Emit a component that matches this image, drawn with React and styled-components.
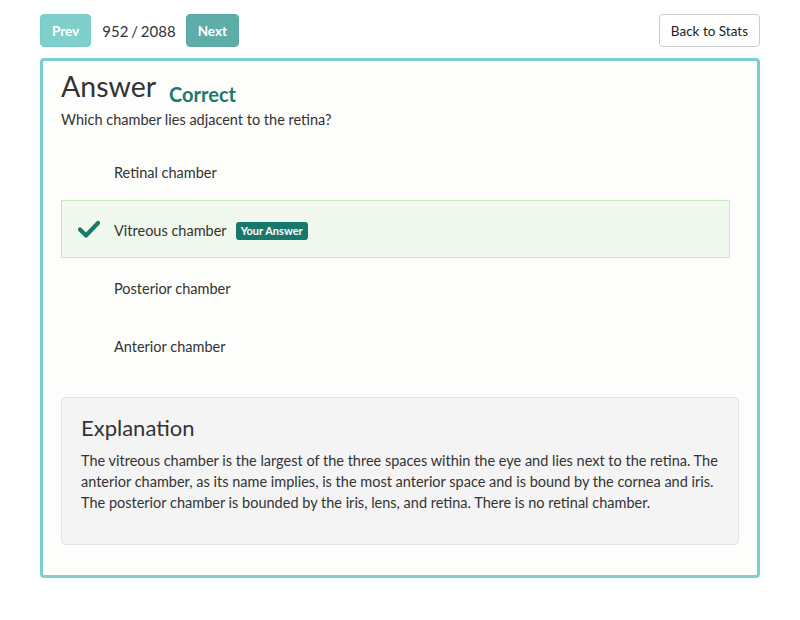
import styled, { createGlobalStyle } from "styled-components";

const GlobalStyle = createGlobalStyle`
  body {
    margin: 0;
    background: #ffffff;
    font-family: Lato, "Open Sans", sans-serif;
    color: #333333;
  }
`;

const options = [
  { label: "Retinal chamber" },
  { label: "Vitreous chamber", selected: true },
  { label: "Posterior chamber" },
  { label: "Anterior chamber" },
];

const Check = () => (
  <svg width="22" height="18" viewBox="0 0 22 18">
    <path
      d="M2 9.5 L8 15.5 L20 3"
      fill="none"
      stroke="#1a7a6c"
      strokeWidth="4.2"
      strokeLinecap="round"
      strokeLinejoin="round"
    />
  </svg>
);

const App = () => {
  return (
    <Page>
      <GlobalStyle />
      <Toolbar>
        <NavButton $tone="light">Prev</NavButton>
        <Counter>952 / 2088</Counter>
        <NavButton $tone="dark">Next</NavButton>
        <BackButton>Back to Stats</BackButton>
      </Toolbar>
      <Card>
        <HeadingRow>
          <Title>Answer</Title>
          <Verdict>Correct</Verdict>
        </HeadingRow>
        <Question>Which chamber lies adjacent to the retina?</Question>
        <OptionList>
          {options.map((o) => (
            <Option key={o.label} $selected={o.selected}>
              <Mark>{o.selected && <Check />}</Mark>
              <OptionText>{o.label}</OptionText>
              {o.selected && <Badge>Your Answer</Badge>}
            </Option>
          ))}
        </OptionList>
        <Explanation>
          <ExplanationTitle>Explanation</ExplanationTitle>
          <ExplanationText>
            The vitreous chamber is the largest of the three spaces within the
            eye and lies next to the retina. The anterior chamber, as its name
            implies, is the most anterior space and is bound by the cornea and
            iris. The posterior chamber is bounded by the iris, lens, and
            retina. There is no retinal chamber.
          </ExplanationText>
        </Explanation>
      </Card>
    </Page>
  );
};

export default App;

const Page = styled.div`
  width: 720px;
  padding: 14px 40px 0;
`;

const Toolbar = styled.div`
  display: flex;
  align-items: center;
  height: 33px;
  margin-bottom: 11px;
`;

const NavButton = styled.button`
  height: 33px;
  padding: 0 11px;
  border: 1px solid ${(p) => (p.$tone === "dark" ? "#5aa9a5" : "#79cbc8")};
  border-radius: 4px;
  background: ${(p) => (p.$tone === "dark" ? "#5fada9" : "#7fd0cd")};
  color: #ffffff;
  font-family: Lato, sans-serif;
  font-weight: 700;
  font-size: 13.5px;
`;

const Counter = styled.span`
  margin: 0 10px 0 11px;
  font-size: 15px;
  color: #333;
  word-spacing: -1px;
`;

const BackButton = styled.button`
  margin-left: auto;
  height: 33px;
  padding: 0 11px;
  border: 1px solid #cccccc;
  border-radius: 4px;
  background: #ffffff;
  color: #222;
  font-family: Lato, sans-serif;
  font-size: 13.5px;
`;

const Card = styled.div`
  border: 3px solid #7ccfcc;
  border-radius: 4px;
  background: #fdfdfb;
  padding: 6px 18px 30px 18px;
`;

const HeadingRow = styled.div`
  display: flex;
  align-items: flex-end;
  gap: 13px;
  height: 38px;
`;

const Title = styled.h1`
  margin: 0;
  font-size: 28.5px;
  font-weight: 400;
  line-height: 38px;
  color: #333;
`;

const Verdict = styled.span`
  font-size: 20px;
  font-weight: 700;
  color: #1a7a6c;
  line-height: 28px;
  margin-bottom: -3px;
`;

const Question = styled.p`
  margin: 6px 0 14px;
  font-size: 14.5px;
  color: #333;
`;

const OptionList = styled.div`
  display: flex;
  flex-direction: column;
  margin-right: 9px;
  margin-bottom: 23px;
`;

const Option = styled.div`
  display: flex;
  align-items: center;
  height: 58px;
  box-sizing: border-box;
  padding: 3px 16px 0;
  border: 1px solid ${(p) => (p.$selected ? "#c8e8c0" : "transparent")};
  background: ${(p) => (p.$selected ? "#f1f9ee" : "transparent")};
`;

const Mark = styled.span`
  width: 36px;
  display: flex;
  align-items: center;
  margin-top: -3px;
`;

const OptionText = styled.span`
  font-size: 14.5px;
  color: #333;
`;

const Badge = styled.span`
  margin-left: 9px;
  padding: 2px 5px;
  border-radius: 3px;
  background: #17786b;
  color: #fff;
  font-size: 11px;
  font-weight: 700;
  line-height: 14px;
`;

const Explanation = styled.div`
  background: #f4f4f4;
  border: 1px solid #e2e2e2;
  border-radius: 4px;
  padding: 16px 19px 31px;
`;

const ExplanationTitle = styled.h2`
  margin: 0 0 9px;
  font-size: 22px;
  font-weight: 400;
  color: #333;
`;

const ExplanationText = styled.p`
  margin: 0;
  font-size: 14.5px;
  line-height: 21px;
  color: #333;
`;
